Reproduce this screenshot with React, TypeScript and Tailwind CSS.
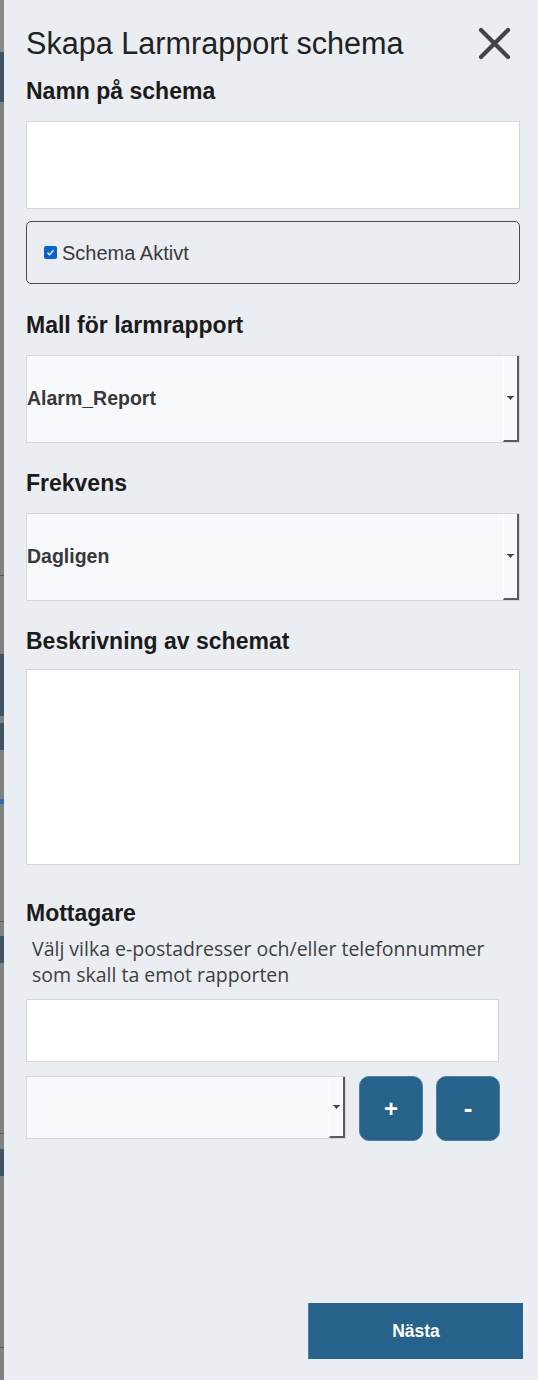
import React from 'react';

// Thin strip of the page behind the drawer (left edge)
const BackdropStrip: React.FC = () => (
  <div className="w-[4px] shrink-0 bg-[#818181] flex flex-col">
    <div className="h-[52px] bg-[#8a8a8a]" />
    <div className="h-[50px] bg-[#3d5564]" />
    <div className="h-[473px]" />
    <div className="h-px bg-[#555]" />
    <div className="h-[78px]" />
    <div className="h-[62px] bg-[#3d5564]" />
    <div className="h-[7px]" />
    <div className="h-[27px] bg-[#3d5564]" />
    <div className="h-[49px]" />
    <div className="h-[5px] bg-[#2f6fb0]" />
    <div className="h-[117px]" />
    <div className="h-px bg-[#5c5c5c]" />
    <div className="h-[14px]" />
    <div className="h-[27px] bg-[#3d5564]" />
    <div className="h-[170px]" />
    <div className="h-px bg-[#5c5c5c]" />
    <div className="h-[15px]" />
    <div className="h-[27px] bg-[#3d5564]" />
    <div className="h-[171px]" />
    <div className="h-px bg-[#5c5c5c]" />
  </div>
);

const Label: React.FC<{ children: React.ReactNode; className?: string }> = ({ children, className = '' }) => (
  <div className={`text-[23px] leading-[26px] font-bold text-[#1b1b1b] ${className}`}>{children}</div>
);

const SelectArrow: React.FC = () => (
  <svg width="7" height="4" viewBox="0 0 7 4" fill="#444">
    <path d="M0 0h7v1H0z M1 1h5L3.5 4z" />
  </svg>
);

const FakeSelect: React.FC<{ value?: string; className?: string }> = ({ value, className = '' }) => (
  <div className={`flex border border-[#d5d7db] bg-[#f7f9fd] ${className}`}>
    <div className="flex-1 flex items-center text-[19.5px] font-bold text-[#383838]">{value}</div>
    <div className="w-[16px] flex items-center justify-center border-l border-l-white border-r-2 border-b-2 border-r-[#5b5b5b] border-b-[#5b5b5b]">
      <SelectArrow />
    </div>
  </div>
);

export default function App() {
  return (
    <div
      className="flex w-[538px] h-[1380px] bg-[#eaedf1]"
      style={{ fontFamily: '"Liberation Sans", Arial, sans-serif' }}
    >
      <BackdropStrip />
      <div className="flex-1 flex flex-col pl-[22px] pr-[18px] pb-[21px]">
        {/* Header */}
        <div className="flex items-center justify-between pt-[25px]">
          <h1 className="text-[30.6px] leading-[36px] text-[#222]">Skapa Larmrapport schema</h1>
          <button className="mr-[9px] text-[#444]" aria-label="Stäng">
            <svg width="33" height="33" viewBox="0 0 33 33" fill="none" stroke="currentColor" strokeWidth="4.2" strokeLinecap="round">
              <path d="M3 3l27 27M30 3L3 30" />
            </svg>
          </button>
        </div>

        <Label className="mt-[17px]">Namn på schema</Label>
        <input className="mt-[17px] h-[88px] w-full bg-white border border-[#d5d7db] outline-none" />

        <label className="mt-[12px] h-[63px] flex items-center gap-[5px] pl-[17px] border border-[#4d4d4d] rounded-[5px] text-[20px] text-[#3a3a3a]">
          <span className="w-[13px] h-[13px] rounded-[2px] bg-[#0b64c8] flex items-center justify-center">
            <svg width="9" height="9" viewBox="0 0 9 9" fill="none" stroke="white" strokeWidth="1.3">
              <path d="M1.5 4.8l2 2 4-4.5" />
            </svg>
          </span>
          Schema Aktivt
        </label>

        <Label className="mt-[28px]">Mall för larmrapport</Label>
        <FakeSelect value="Alarm_Report" className="mt-[17px] h-[88px]" />

        <Label className="mt-[27px]">Frekvens</Label>
        <FakeSelect value="Dagligen" className="mt-[17px] h-[88px]" />

        <Label className="mt-[27px]">Beskrivning av schemat</Label>
        <textarea className="mt-[15px] h-[196px] w-full bg-white border border-[#d5d7db] outline-none resize-none" />

        <Label className="mt-[35px]">Mottagare</Label>
        <p
          className="mt-[10px] pl-[6px] w-[462px] text-[19.5px] leading-[26px] text-[#404040]"
          style={{ fontFamily: '"Open Sans", sans-serif' }}
        >
          Välj vilka e-postadresser och/eller telefonnummer som skall ta emot rapporten
        </p>
        <input className="mt-[11px] h-[63px] w-[473px] bg-white border border-[#d5d7db] outline-none" />

        <div className="mt-[14px] flex items-start">
          <FakeSelect className="w-[320px] h-[63px]" />
          <button className="ml-[13px] w-[64px] h-[65px] rounded-[10px] bg-[#27628a] border border-[#4f7f9f] text-white text-[24px] font-bold">
            +
          </button>
          <button className="ml-[13px] w-[64px] h-[65px] rounded-[10px] bg-[#27628a] border border-[#4f7f9f] text-white text-[26px] font-bold">
            -
          </button>
        </div>

        <div className="mt-auto flex justify-end -mr-[3px]">
          <button className="w-[215px] h-[56px] bg-[#27628a] border-l border-l-[#4f7f9f] text-white text-[17.5px] font-bold">
            Nästa
          </button>
        </div>
      </div>
    </div>
  );
}
